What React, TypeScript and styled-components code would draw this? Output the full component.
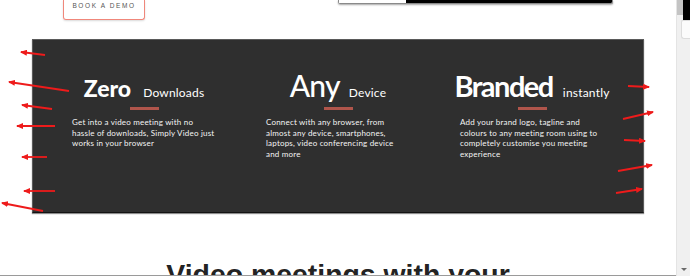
import React from "react";
import styled, { createGlobalStyle } from "styled-components";

const Global = createGlobalStyle`
  html, body { margin: 0; padding: 0; background: #ffffff; }
  body { font-family: "Lato", "Liberation Sans", sans-serif; overflow: hidden; }
`;

const Screen = styled.div`
  position: relative;
  width: 690px;
  height: 276px;
  display: flex;
  overflow: hidden;
`;

const Main = styled.div`
  width: 676px;
  height: 275px;
  border-bottom: 1px solid #9a9a9a;
  display: flex;
  flex-direction: column;
  overflow: hidden;
`;

const TopBar = styled.div`
  height: 39px;
  flex: none;
  display: flex;
  align-items: flex-start;
`;

const DemoButton = styled.div`
  margin-left: 63px;
  width: 82px;
  height: 20px;
  box-sizing: border-box;
  border: 1px solid #f0877b;
  border-top: none;
  border-radius: 0 0 3px 3px;
  box-shadow: 0 1px 2px rgba(0, 0, 0, 0.15);
  display: flex;
  justify-content: center;
  padding-top: 2px;
  font-family: "Liberation Sans", sans-serif;
  font-size: 6.5px;
  letter-spacing: 1.6px;
  color: #555;
  line-height: 8px;
`;

const VideoStrip = styled.div`
  margin-left: 193px;
  width: 275px;
  height: 4px;
  box-sizing: border-box;
  border: 1px solid #8a8a8a;
  border-top: none;
  border-radius: 0 0 2px 2px;
  box-shadow: 0 1px 2px rgba(0, 0, 0, 0.35);
  display: flex;
  overflow: hidden;
`;

const StripPart = styled.div<{ $dark?: boolean; $w?: number }>`
  height: 100%;
  background: ${(p) => (p.$dark ? "#000" : "#fff")};
  ${(p) => (p.$w ? `width: ${p.$w}px;` : "flex: 1;")}
`;

const Panel = styled.section`
  margin: 0 32px;
  height: 174px;
  flex: none;
  box-sizing: border-box;
  background: #2f2f2f;
  border: 1px solid #5a5a5a;
  border-bottom-color: #141414;
  box-shadow: 0 1px 1px rgba(0, 0, 0, 0.45);
  padding: 30px 39px 0;
  display: flex;
  gap: 50px;
  align-items: flex-start;
  color: #fff;
`;

const Column = styled.div`
  width: 144px;
  flex: none;
  display: flex;
  flex-direction: column;
  align-items: center;
`;

const Heading = styled.div`
  align-self: stretch;
  display: flex;
  justify-content: center;
`;

const HeadLine = styled.div`
  font-size: 30px;
  line-height: 30px;
  white-space: nowrap;
`;

const BigWord = styled.span<{ $size: number; $weight: number; $spacing: number }>`
  font-size: ${(p) => p.$size}px;
  font-weight: ${(p) => p.$weight};
  letter-spacing: ${(p) => p.$spacing}px;
  line-height: 1;
`;

const SmallWord = styled.span<{ $gap: number }>`
  margin-left: ${(p) => p.$gap}px;
  font-size: 12px;
  font-weight: 400;
  letter-spacing: 0.2px;
  line-height: 1;
`;

const Bar = styled.div`
  width: 29px;
  height: 3px;
  margin-top: 7px;
  background: #b0554b;
`;

const Body = styled.p`
  align-self: stretch;
  margin: 7px 0 0;
  font-size: 8px;
  line-height: 10.5px;
  letter-spacing: 0.2px;
  color: #f4f4f4;
  white-space: nowrap;
`;

const Title = styled.h2`
  margin: 44px 0 0;
  text-align: center;
  font-family: "Liberation Sans", sans-serif;
  font-weight: 700;
  font-size: 28.4px;
  line-height: 1.2;
  color: #232323;
  letter-spacing: 0;
`;

const ScrollBar = styled.div`
  width: 14px;
  height: 276px;
  box-sizing: border-box;
  background: #f0f0f0;
  border-left: 1px solid #e4e4e4;
  display: flex;
  flex-direction: column;
`;

const ScrollTop = styled.div`
  display: flex;
  height: 20px;
`;

const Thumb = styled.div`
  width: 6px;
  height: 15px;
  background: #c4c4c4;
`;

const Dark = styled.div`
  flex: 1;
  background: #000;
`;

const Tab = styled.div`
  margin-left: 4px;
  height: 17px;
  background: #fbfbfb;
  border: 1px solid #dcdcdc;
  border-right: none;
  border-radius: 2px 0 0 3px;
`;

const Spacer = styled.div`
  flex: 1;
`;

const DownArrow = styled.div`
  align-self: center;
  margin-bottom: 5px;
  width: 0;
  height: 0;
  border-left: 3px solid transparent;
  border-right: 3px solid transparent;
  border-top: 3px solid #6a6a6a;
`;

const Annotations = styled.svg`
  position: absolute;
  left: 0;
  top: 0;
  pointer-events: none;
`;

type Feature = {
  big: string;
  small: string;
  size: number;
  weight: number;
  spacing: number;
  gap: number;
  lines: string[];
};

const features: Feature[] = [
  {
    big: "Zero",
    small: "Downloads",
    size: 23,
    weight: 900,
    spacing: 0,
    gap: 12,
    lines: ["Get into a video meeting with no", "hassle of downloads, Simply Video just", "works in your browser"],
  },
  {
    big: "Any",
    small: "Device",
    size: 30,
    weight: 500,
    spacing: -0.8,
    gap: 9,
    lines: ["Connect with any browser, from", "almost any device, smartphones,", "laptops, video conferencing device", "and more"],
  },
  {
    big: "Branded",
    small: "instantly",
    size: 29,
    weight: 700,
    spacing: -1.5,
    gap: 10,
    lines: ["Add your brand logo, tagline and", "colours to any meeting room using to", "completely customise you meeting", "experience"],
  },
];

const arrows: [number, number, number, number][] = [
  [45, 55, 21, 52],
  [69, 91, 9, 82],
  [52, 109, 22, 105],
  [55, 126, 17, 126],
  [47, 157, 22, 157],
  [55, 191, 24, 191],
  [43, 211, 2, 203],
  [628, 86, 649, 87],
  [623, 119, 653, 112],
  [624, 140, 645, 141],
  [618, 171, 652, 165],
  [616, 193, 642, 189],
];

export default function App() {
  return (
    <>
      <Global />
      <Screen>
        <Main>
          <TopBar>
            <DemoButton>BOOK A DEMO</DemoButton>
            <VideoStrip>
              <StripPart $w={67} />
              <StripPart $dark />
            </VideoStrip>
          </TopBar>
          <Panel>
            {features.map((f) => (
              <Column key={f.big}>
                <Heading>
                  <HeadLine>
                    <BigWord $size={f.size} $weight={f.weight} $spacing={f.spacing}>
                      {f.big}
                    </BigWord>
                    <SmallWord $gap={f.gap}>{f.small}</SmallWord>
                  </HeadLine>
                </Heading>
                <Bar />
                <Body>
                  {f.lines.map((l, j) => (
                    <React.Fragment key={j}>
                      {l}
                      {j < f.lines.length - 1 && <br />}
                    </React.Fragment>
                  ))}
                </Body>
              </Column>
            ))}
          </Panel>
          <Title>Video meetings with your</Title>
        </Main>
        <ScrollBar>
          <ScrollTop>
            <Thumb />
            <Dark />
          </ScrollTop>
          <Tab />
          <Spacer />
          <DownArrow />
        </ScrollBar>
        <Annotations width={690} height={276} viewBox="0 0 690 276">
          <defs>
            <marker id="head" markerWidth="7" markerHeight="6" refX="6" refY="3" orient="auto" markerUnits="userSpaceOnUse">
              <path d="M0,0 L7,3 L0,6 Z" fill="#ee1b1b" />
            </marker>
          </defs>
          {arrows.map(([x1, y1, x2, y2], i) => (
            <line
              key={i}
              x1={x1}
              y1={y1}
              x2={x2}
              y2={y2}
              stroke="#ee1b1b"
              strokeWidth={1.8}
              markerEnd="url(#head)"
            />
          ))}
        </Annotations>
      </Screen>
    </>
  );
}
